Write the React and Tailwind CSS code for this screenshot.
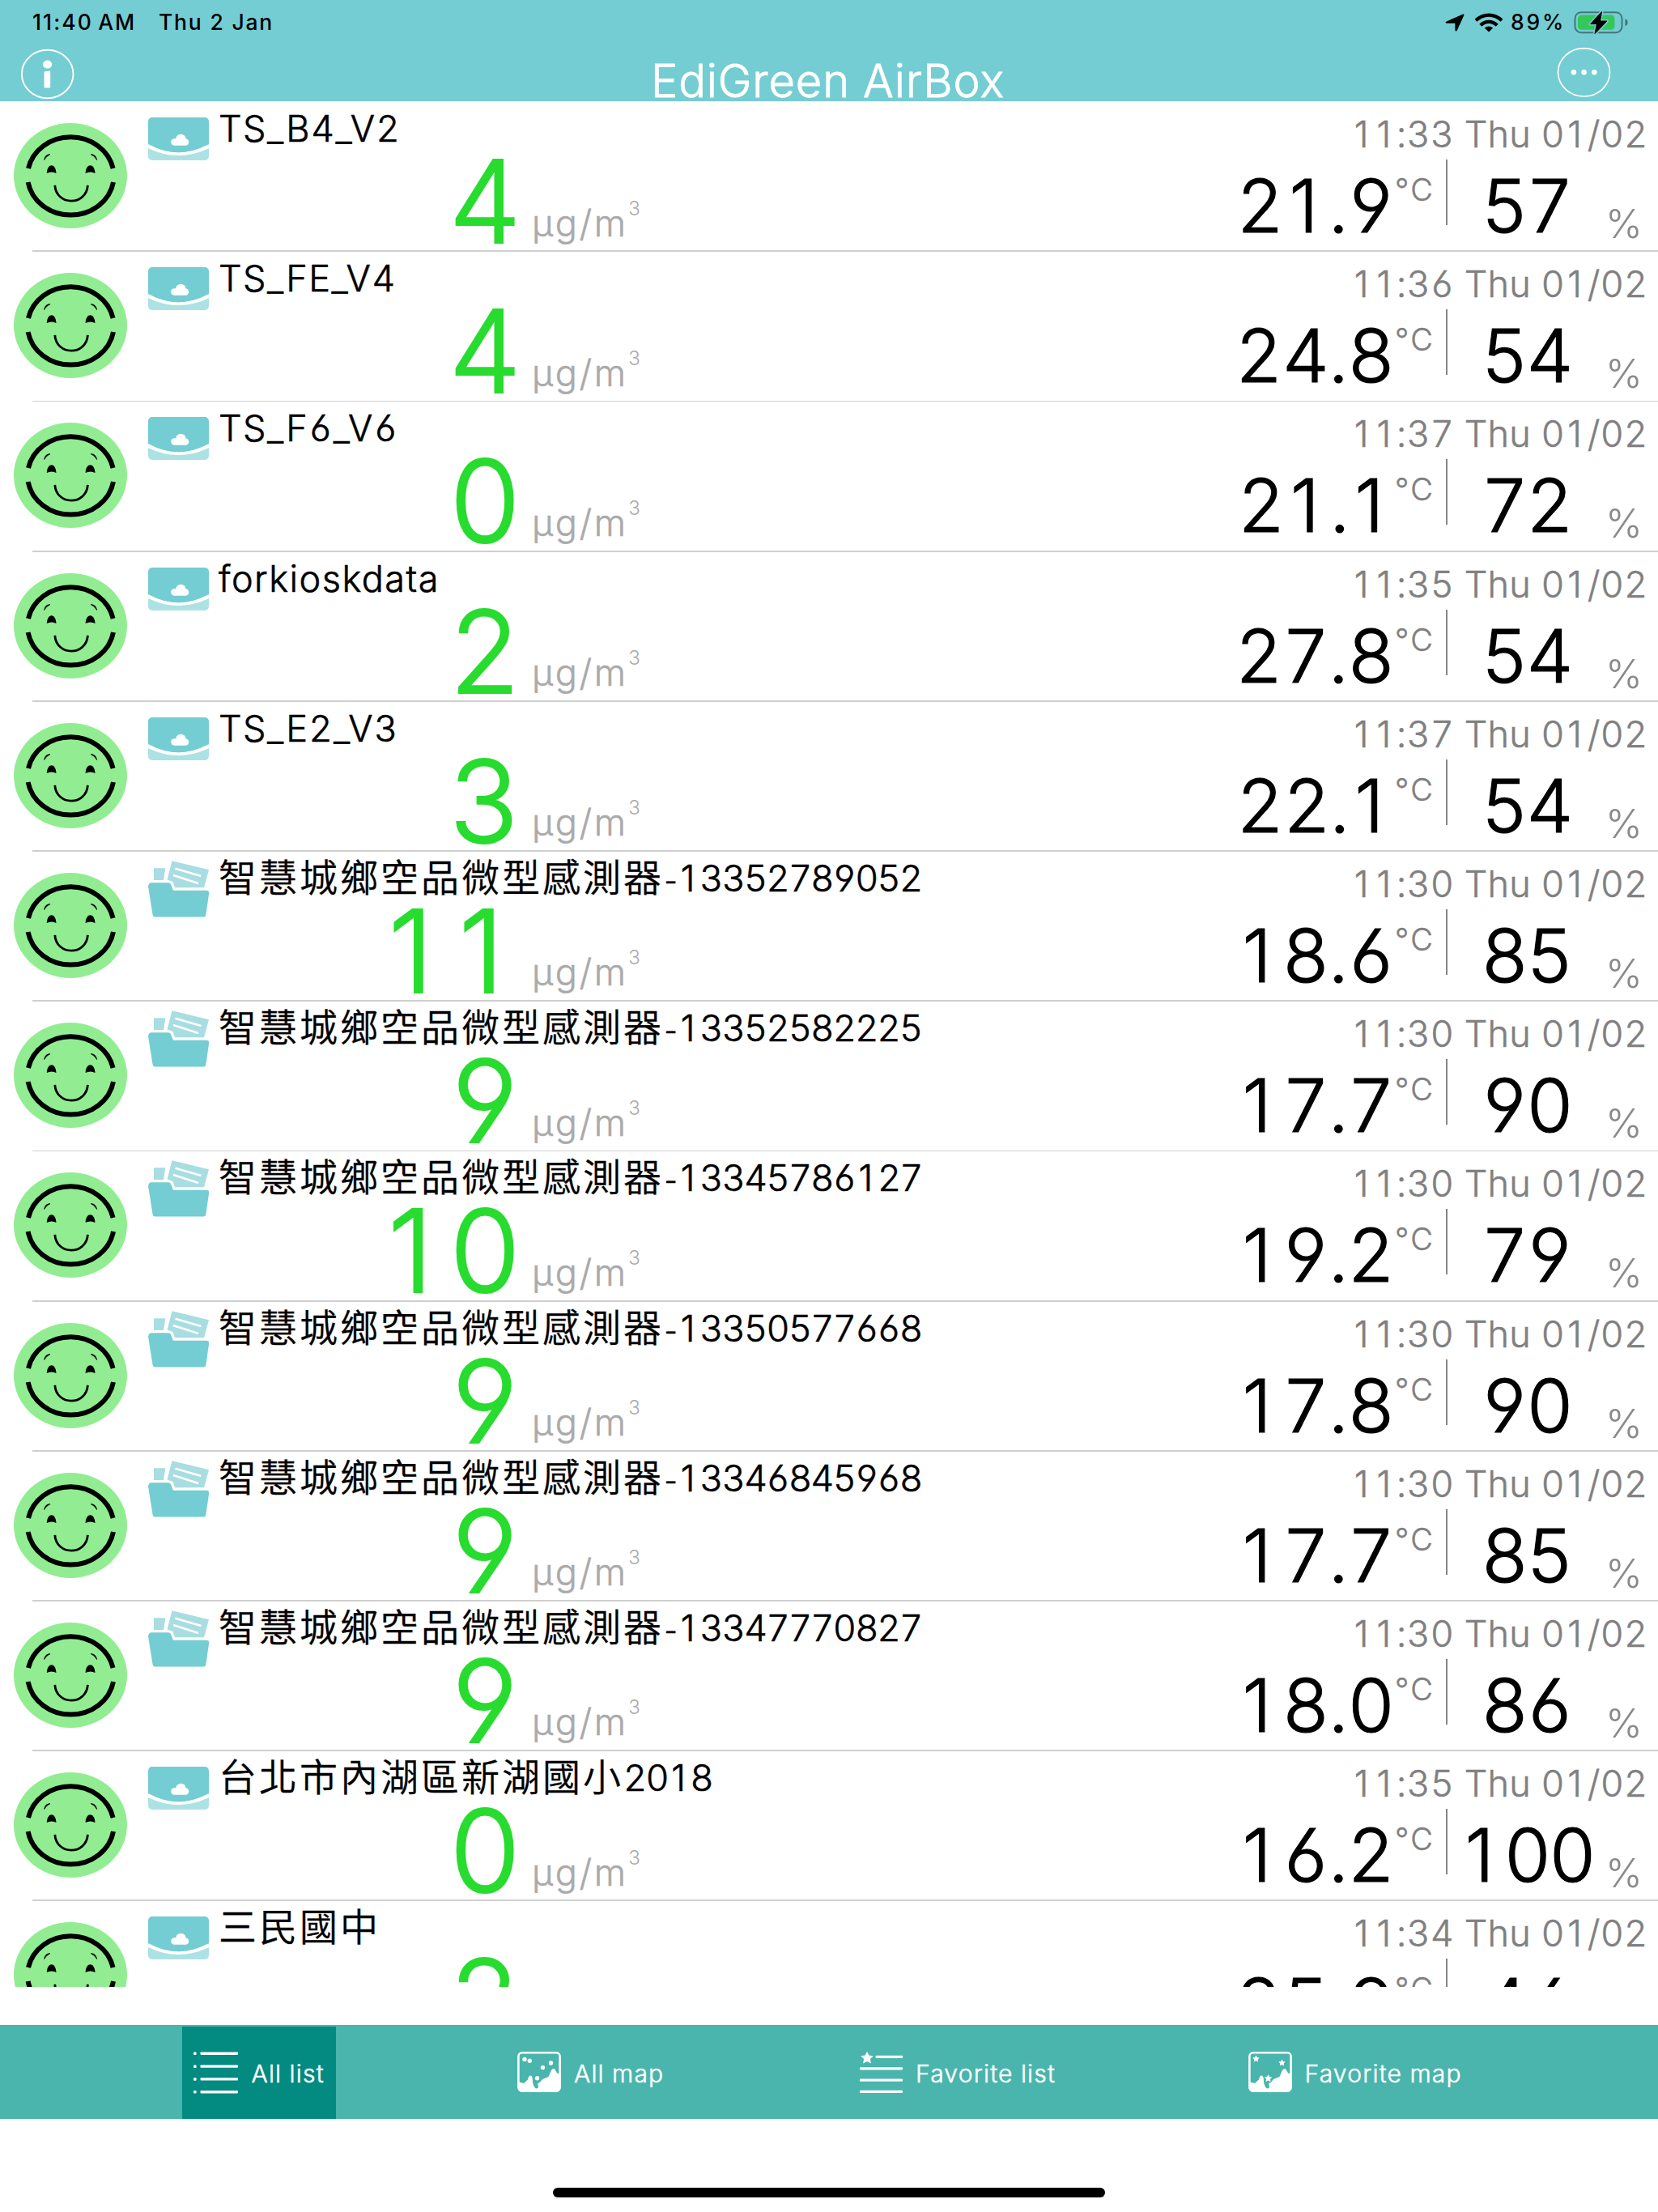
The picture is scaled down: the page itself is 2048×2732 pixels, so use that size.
const TEAL = "#74cdd2";

const DEVICES = [
  { name: "TS_B4_V2", kind: "box", pm: "4", time: "11:33", temp: "21.9", hum: "57" },
  { name: "TS_FE_V4", kind: "box", pm: "4", time: "11:36", temp: "24.8", hum: "54" },
  { name: "TS_F6_V6", kind: "box", pm: "0", time: "11:37", temp: "21.1", hum: "72" },
  { name: "forkioskdata", kind: "box", pm: "2", time: "11:35", temp: "27.8", hum: "54" },
  { name: "TS_E2_V3", kind: "box", pm: "3", time: "11:37", temp: "22.1", hum: "54" },
  { cjk: "智慧城鄉空品微型感測器", dash: true, digits: "13352789052", kind: "folder", pm: "11", time: "11:30", temp: "18.6", hum: "85" },
  { cjk: "智慧城鄉空品微型感測器", dash: true, digits: "13352582225", kind: "folder", pm: "9", time: "11:30", temp: "17.7", hum: "90" },
  { cjk: "智慧城鄉空品微型感測器", dash: true, digits: "13345786127", kind: "folder", pm: "10", time: "11:30", temp: "19.2", hum: "79" },
  { cjk: "智慧城鄉空品微型感測器", dash: true, digits: "13350577668", kind: "folder", pm: "9", time: "11:30", temp: "17.8", hum: "90" },
  { cjk: "智慧城鄉空品微型感測器", dash: true, digits: "13346845968", kind: "folder", pm: "9", time: "11:30", temp: "17.7", hum: "85" },
  { cjk: "智慧城鄉空品微型感測器", dash: true, digits: "13347770827", kind: "folder", pm: "9", time: "11:30", temp: "18.0", hum: "86" },
  { cjk: "台北市內湖區新湖國小", digits: "2018", kind: "box", pm: "0", time: "11:35", temp: "16.2", hum: "100" },
  { cjk: "三民國中", kind: "box", pm: "2", time: "11:34", temp: "25.9", hum: "46" },
];

// Tabular digits, with the plain proportional "1" set in a cell of the same width.
function Digits({ children }) {
  return children.split(/(1)/).map((part, i) =>
    part === "1" ? (
      <span key={i} className="inline-block w-[0.617em] pr-[0.07em] text-center [font-feature-settings:'cv03','cv04']">1</span>
    ) : (
      part
    )
  );
}

function Smiley() {
  return (
    <svg className="mt-[27px] ml-[17px] h-[130px] w-[140px] shrink-0" viewBox="0 0 140 130" fill="none">
      <ellipse cx="70" cy="65" rx="70" ry="65" fill="#92ed92" />
      <g stroke="#000" strokeWidth="6">
        <path d="M18 56A53.5 49 0 0 1 122.600 56" />
        <path d="M17.600 73A53.500 49 0 0 0 123 73" />
      </g>
      <path d="M50.800 76.800C52.500 102.600 89.500 102.600 91.400 76.800" stroke="#000" strokeWidth="2.800" />
      <path d="M40.800 62C41 55.500 44 52.300 46.700 52.300S52.200 55.500 52.500 62Q46.700 59 40.800 62Z" fill="#000" />
      <path d="M88.600 62C88.800 55.500 91.700 52.300 94.500 52.300S100.300 55.500 100.500 62Q94.500 59 88.600 62Z" fill="#000" />
      <path d="M37.600 45.500Q38.500 38.800 45 38.600Q40.500 40.500 37.600 45.500Z" fill="#000" stroke="#000" strokeWidth="0.800" />
      <path d="M102.600 45.500Q101.500 38.800 95.200 38.600Q99.700 40.500 102.600 45.500Z" fill="#000" stroke="#000" strokeWidth="0.800" />
    </svg>
  );
}

function BoxIcon() {
  return (
    <svg className="mt-5 h-[53px] w-[75px]" viewBox="0 0 75 53">
      <path d="M0 38Q37 56 75 38V48a5 5 0 0 1-5 5H5a5 5 0 0 1-5-5Z" fill="#ade2e5" />
      <path d="M5 0H70a5 5 0 0 1 5 5V33.500Q37.500 54 0 33.500V5a5 5 0 0 1 5-5Z" fill={TEAL} />
      <path d="M0 34.500Q37.500 55 75 34.500" fill="none" stroke="#fff" strokeWidth="2.600" />
      <path d="M32 34.700a4.300 4.300 0 0 1-.6-8.400h3a6 5.600 0 0 1 12 0a4.400 4.300 0 0 1 .6 8.400Z" fill="#fff" />
    </svg>
  );
}

function FolderIcon() {
  return (
    <svg className="mt-3 h-[70px] w-[76px]" viewBox="0 0 76 70">
      <path d="M7 9.300H21.300L19 24H7Z" fill="#a8dde1" />
      <path d="M29.500.300L75 11.300L69 33.300H33L30.500 26L23.500 23.500Z" fill="#a8dde1" />
      <path d="M33.500 9.800L65.400 19M31 18L62 28" stroke="#fff" strokeWidth="2.600" fill="none" />
      <path d="M0 31.500Q1 27.300 4 27.300H24.500Q27.500 27.300 28.500 30.500L31 36.800H71.500Q75.500 36.800 75.200 40L71.300 67Q71 69.500 68.500 69.500H8.500Q6 69.500 5.600 67Z" fill={TEAL} />
    </svg>
  );
}

function DeviceRow({ device }) {
  return (
    <div className="flex h-[185.2px] shrink-0 flex-col">
      <div className="flex h-[184.4px] shrink-0">
        <Smiley />
        <div className="ml-[26px] w-[87px] shrink-0">{device.kind === "box" ? <BoxIcon /> : <FolderIcon />}</div>
        <div className="grow">
          <div className="mt-[4px] flex h-[60px] items-baseline text-[45px] leading-[60px] font-light whitespace-nowrap [-webkit-text-stroke-width:0.6px] before:content-['\200b']">
            {device.name && <span className="tracking-[1.5px]">{device.name}</span>}
            {device.cjk && (
              <span className="text-[47px] leading-none font-[350] tracking-[3px] [-webkit-text-stroke-width:0.3px]">{device.cjk}</span>
            )}
            {device.dash && <span className="-ml-[3px] w-[19.5px] text-[36px]">-</span>}
            {device.digits && <span className="tracking-[-1.7px]"><Digits>{device.digits}</Digits></span>}
          </div>
          <div className="mt-[10px] flex">
            <div className="w-[371px] text-right text-[141px] leading-[100px] font-light tracking-[-3.7px] text-[#28dc2f] [-webkit-text-stroke-width:2px]">
              <Digits>{device.pm}</Digits>
            </div>
            <div className="mt-[55.5px] ml-[16px] w-[119px] text-[45px] leading-[42px] font-light tracking-[2.5px] text-[#aaaaaa] [-webkit-text-stroke-width:0.5px]">µg/m</div>
            <div className="mt-[46.5px] text-[24px] leading-[24px] font-light text-[#aaaaaa]">3</div>
          </div>
        </div>
        <div className="flex w-[600px] shrink-0 flex-col">
          <div className="mt-[11px] pr-[12.5px] text-right text-[45px] leading-[60px] font-light tracking-[0.3px] whitespace-nowrap text-[#808080] [-webkit-text-stroke-width:0.5px]">
            <Digits>{device.time}</Digits> Thu <Digits>01/02</Digits>
          </div>
          <div className="flex">
            <div className="mt-[13px] w-[274px] text-right text-[91px] leading-[91px] font-light tracking-[-1.2px] [-webkit-text-stroke-width:1.2px]">
              <Digits>{device.temp}</Digits>
            </div>
            <div className="mt-[19px] ml-px w-[63px] text-[38px] leading-[38px] font-light tracking-[2.5px] text-[#808080] [-webkit-text-stroke-width:0.5px]">°C</div>
            <div className="mt-px h-[81px] w-[2px] bg-[#858585]" />
            <div className="mt-[13px] w-[194px] text-center text-[91px] leading-[91px] font-light tracking-[-3.2px] [-webkit-text-stroke-width:1.2px]">
              <Digits>{device.hum}</Digits>
            </div>
            <div className="mt-[56px] ml-px text-[49px] leading-[49px] font-light text-[#8a8a8a]">%</div>
          </div>
        </div>
      </div>
      <div className="ml-10 h-[1.8px] shrink-0 bg-[#cfcfcf]" />
    </div>
  );
}

const STAR = "M0-8L2.400-3.200L7.800-2.500L3.900 1.300L4.900 6.700L0 4.100L-4.900 6.700L-3.900 1.300L-7.800-2.500L-2.400-3.200Z";

function ListIcon() {
  return (
    <svg className="h-[54px] w-[58px]" viewBox="0 0 58 54" fill="#fff">
      {[1.5, 17.4, 33.2, 49].map((y) => (
        <g key={y}>
          <rect x="1" y={y} width="3.600" height="3.600" rx="1" />
          <rect x="9.500" y={y} width="46.500" height="3.400" rx="0.800" />
        </g>
      ))}
    </svg>
  );
}

function FavListIcon() {
  return (
    <svg className="h-[54px] w-[54px]" viewBox="0 0 54 54" fill="#fff">
      <path d={STAR} transform="translate(9 8.800)" />
      <rect x="19.600" y="5.700" width="33.500" height="3.200" rx="0.800" />
      <rect x="0" y="20.200" width="53" height="3.200" rx="0.800" />
      <rect x="0" y="34.500" width="53" height="3.200" rx="0.800" />
      <rect x="0" y="48.800" width="53" height="3.200" rx="0.800" />
    </svg>
  );
}

function MapIcon({ stars }) {
  return (
    <svg className="h-[50px] w-[54px]" viewBox="0 0 54 50">
      <rect x="1.400" y="1.300" width="51.200" height="47.400" rx="4.500" fill="none" stroke="#fff" strokeWidth="2.600" />
      <path
        d="M2 37.500L8 39L13 34.500Q14 29.500 16 29.500Q18.500 29.500 18.700 33Q19 43 23 45.500Q26 45.500 26 43L25 39.500Q29 38 31 34L38.500 31L42 23Q44.500 19.500 46.500 22L49 26.500L52 27V44Q52 48 48 48H6Q2 48 2 44Z"
        fill="#fff"
      />
      <g fill="#fff">
        {stars ? (
          <>
            <path d={STAR} transform="translate(9.400 8.800) scale(.55)" />
            <path d={STAR} transform="translate(41.500 13.800) scale(.55)" />
            <path d={STAR} transform="translate(24.500 33) scale(.62)" />
          </>
        ) : (
          <>
            <circle cx="9" cy="9.400" r="2.700" />
            <circle cx="15.300" cy="11.300" r="2.700" />
            <circle cx="31.500" cy="19.600" r="2.700" />
            <circle cx="41.500" cy="14" r="2.700" />
            <circle cx="24.500" cy="32.800" r="2.700" />
          </>
        )}
      </g>
    </svg>
  );
}

const LABEL = "text-[30px] leading-[30px] font-light tracking-[1.2px] whitespace-nowrap text-white [-webkit-text-stroke-width:0.5px]";

export default function App() {
  return (
    <div className="flex h-[2732px] w-[2048px] flex-col overflow-hidden bg-white font-[Inter,'Noto_Sans_CJK_TC',sans-serif] text-black [font-feature-settings:'tnum','cv03','cv04']">
      <header className="flex h-[125px] shrink-0 flex-col bg-[#74cdd2]">
        <div className="flex h-[55px] items-start text-[26.5px] leading-[30px] font-medium [font-feature-settings:'tnum'_0]">
          <div className="mt-[12px] ml-[40px] w-[156px] tracking-[2.1px] whitespace-nowrap [word-spacing:-3px]">11:40 AM</div>
          <div className="mt-[12px] tracking-[1.8px] whitespace-nowrap">Thu 2 Jan</div>
          <svg className="mt-[17px] ml-auto h-[22px] w-[24px]" viewBox="0 0 24 22">
            <path d="M22 .600Q24 0 23.300 2L14.800 20.500Q13.400 22.500 12.400 20.200V11.700H2Q-.400 11.200 1.200 9.700Z" fill="#000" />
          </svg>
          <svg className="mt-[16px] ml-[12px] h-[24px] w-[36px]" viewBox="0 0 36 24" fill="none" stroke="#000" strokeWidth="4.200">
            <path d="M2 9.200Q9 2.600 18 2.600T34 9.200" />
            <path d="M7.800 15.200Q12.200 10.800 18 10.800T28.200 15.200" />
            <path d="M18 23.600L12.800 18.400Q18 14.400 23.200 18.400Z" fill="#000" stroke="none" />
          </svg>
          <div className="mt-[12px] ml-[9px] w-[78px] tracking-[2.8px]">89%</div>
          <svg className="mt-[12px] mr-[37px] h-[32px] w-[67px]" viewBox="0 0 67 32">
            <rect x="1.500" y="3.200" width="58" height="25" rx="7.500" fill="none" stroke="#000" strokeOpacity="0.420" strokeWidth="2" />
            <rect x="5" y="6.600" width="45.500" height="18.200" rx="4.500" fill="#34c759" />
            <path d="M63.500 11.300Q66.500 12.300 66.500 15.700T63.500 20.200Z" fill="#000" fillOpacity="0.450" />
            <path d="M34.500 2.500L20.500 17.600H28.500L26 29.500L41 14H32.500Z" fill="#000" stroke={TEAL} strokeWidth="4" strokeLinejoin="round" paintOrder="stroke" />
            <path d="M34.500 2.500L20.500 17.600H28.500L26 29.500L41 14H32.500Z" fill="#000" stroke="#000" strokeWidth="1" strokeLinejoin="round" />
          </svg>
        </div>
        <div className="flex h-[70px] items-start justify-between">
          <svg className="mt-[5px] ml-[25px] h-[63px] w-[68px]" viewBox="0 0 68 63">
            <ellipse cx="33.700" cy="31.500" rx="31.800" ry="29.700" fill="none" stroke="#fff" strokeWidth="1.900" />
            <ellipse cx="33.600" cy="19.600" rx="5.600" ry="5.100" fill="#fff" />
            <path d="M29.500 28.600L37.200 27.500V47.500Q37.200 48.500 36.200 48.500H30.500Q29.500 48.500 29.500 47.500Z" fill="#fff" />
          </svg>
          <h1 className="mt-[17px] ml-[29px] text-[56px] leading-[56px] font-light tracking-[0.9px] whitespace-nowrap text-white [-webkit-text-stroke-width:0.9px]">EdiGreen AirBox</h1>
          <svg className="mt-[3px] mr-[57px] h-[63px] w-[68px]" viewBox="0 0 68 63">
            <ellipse cx="33.500" cy="31.300" rx="32" ry="29.700" fill="none" stroke="#fff" strokeWidth="1.700" />
            <circle cx="20.900" cy="31.200" r="3.300" fill="#fff" />
            <circle cx="33.600" cy="31.200" r="3.300" fill="#fff" />
            <circle cx="46.300" cy="31.200" r="3.300" fill="#fff" />
          </svg>
        </div>
      </header>

      <main className="flex h-[2329px] shrink-0 flex-col overflow-hidden">
        {DEVICES.map((d, i) => (
          <DeviceRow key={i} device={d} />
        ))}
      </main>

      <nav className="mt-[46.5px] flex h-[116px] shrink-0 items-start bg-[#49b5ad]">
        <div className="mt-[2.5px] ml-[225px] flex h-[113.5px] w-[190px] items-start bg-[#038a81]">
          <div className="mt-[30px] ml-[12.5px]"><ListIcon /></div>
          <div className={`mt-[42.5px] ml-[15px] ${LABEL}`}>All list</div>
        </div>
        <div className="flex w-[422px] items-start">
          <div className="mt-[33px] ml-[224px]"><MapIcon /></div>
          <div className={`mt-[45px] ml-[16px] ${LABEL}`}>All map</div>
        </div>
        <div className="flex w-[480px] items-start">
          <div className="mt-[32.5px] ml-[225px]"><FavListIcon /></div>
          <div className={`mt-[45px] ml-[15px] ${LABEL}`}>Favorite list</div>
        </div>
        <div className="flex items-start">
          <div className="mt-[33px] ml-[224.5px]"><MapIcon stars /></div>
          <div className={`mt-[45px] ml-[16px] ${LABEL}`}>Favorite map</div>
        </div>
      </nav>

      <div className="mt-[85.5px] ml-[683px] h-[12px] w-[682px] shrink-0 rounded-full bg-black" />
    </div>
  );
}
